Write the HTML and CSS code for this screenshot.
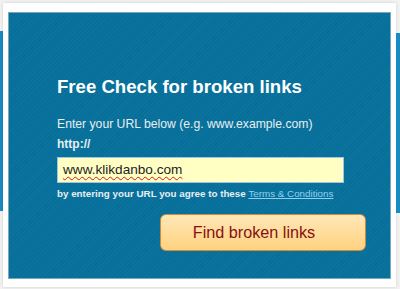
FILE: index.html
```html
<!DOCTYPE html>
<html lang="en">
<head>
    <meta charset="UTF-8">
    <title>Free Check for broken links</title>
    <link rel="stylesheet" href="styles.css">
</head>
<body>
    <div class="side side-left"></div>
    <div id="card">
        <div id="checker">
            <h2>Free Check for broken links</h2>
            <label for="url">Enter your URL below (e.g. www.example.com)</label>
            <div class="prefix">http://</div>
            <div id="url" class="url-field" contenteditable="true" spellcheck="false"><span class="misspelt">www.klikdanbo.com</span></div>
            <p class="terms">by entering your URL you agree to these <a href="#">Terms &amp; Conditions</a></p>
            <div class="actions">
                <button id="checkBtn">Find broken links</button>
            </div>
        </div>
    </div>
    <div class="side side-right"></div>
</body>
</html>
```

FILE: styles.css
```css
* {
    margin: 0;
    padding: 0;
    box-sizing: border-box;
}

body {
    font-family: 'Liberation Sans', Arial, sans-serif;
    background: #f2f2f2;
    width: 400px;
    height: 289px;
    overflow: hidden;
    display: flex;
    align-items: flex-start;
    padding-top: 3px;
}

.side {
    width: 3px;
    height: 180px;
    margin-top: 28px;
    background: #1a8cc4;
    flex: none;
}

.side-right {
    margin-top: 30px;
    width: 4px;
}

#card {
    width: 393px;
    height: 284px;
    background: #fff;
    box-shadow: 0 0 3px rgba(0, 0, 0, 0.15);
    padding: 9px 5px 0 5px;
    flex: none;
}

#checker {
    height: 267px;
    border: 1px solid #7aa7bd;
    background-color: #07709a;
    background-image: repeating-linear-gradient(135deg, rgba(255, 255, 255, 0.03) 0 1px, transparent 1px 3px);
    padding: 63px 24px 0 48px;
    color: #e6eef2;
}

#checker h2 {
    color: #fff;
    font-size: 18.6px;
    font-weight: bold;
    margin-bottom: 19px;
}

#checker label {
    display: block;
    font-size: 12.2px;
    margin-bottom: 6px;
}

.prefix {
    font-size: 12px;
    font-weight: bold;
    margin-bottom: 6px;
}

.url-field {
    width: 287px;
    height: 26px;
    line-height: 24px;
    border: 1px solid #9fc6e0;
    background: #ffffc4;
    font-size: 13.6px;
    color: #222;
    padding: 0 5px;
    outline: none;
}

.misspelt {
    text-decoration: underline wavy #d01818;
    text-decoration-thickness: 1px;
    text-underline-offset: 2px;
}

.terms {
    font-size: 9.8px;
    font-weight: bold;
    margin-top: 5px;
}

.terms a {
    color: #8fd0f0;
    font-weight: normal;
}

.actions {
    display: flex;
    justify-content: flex-end;
    margin-top: 15px;
}

#checkBtn {
    width: 206px;
    height: 37px;
    border: 1px solid #d38a3a;
    border-radius: 6px;
    background: linear-gradient(#ffe7b8, #ffd27f);
    color: #8a1010;
    font-family: inherit;
    font-size: 16.2px;
    padding-right: 18px;
    cursor: pointer;
}
```
